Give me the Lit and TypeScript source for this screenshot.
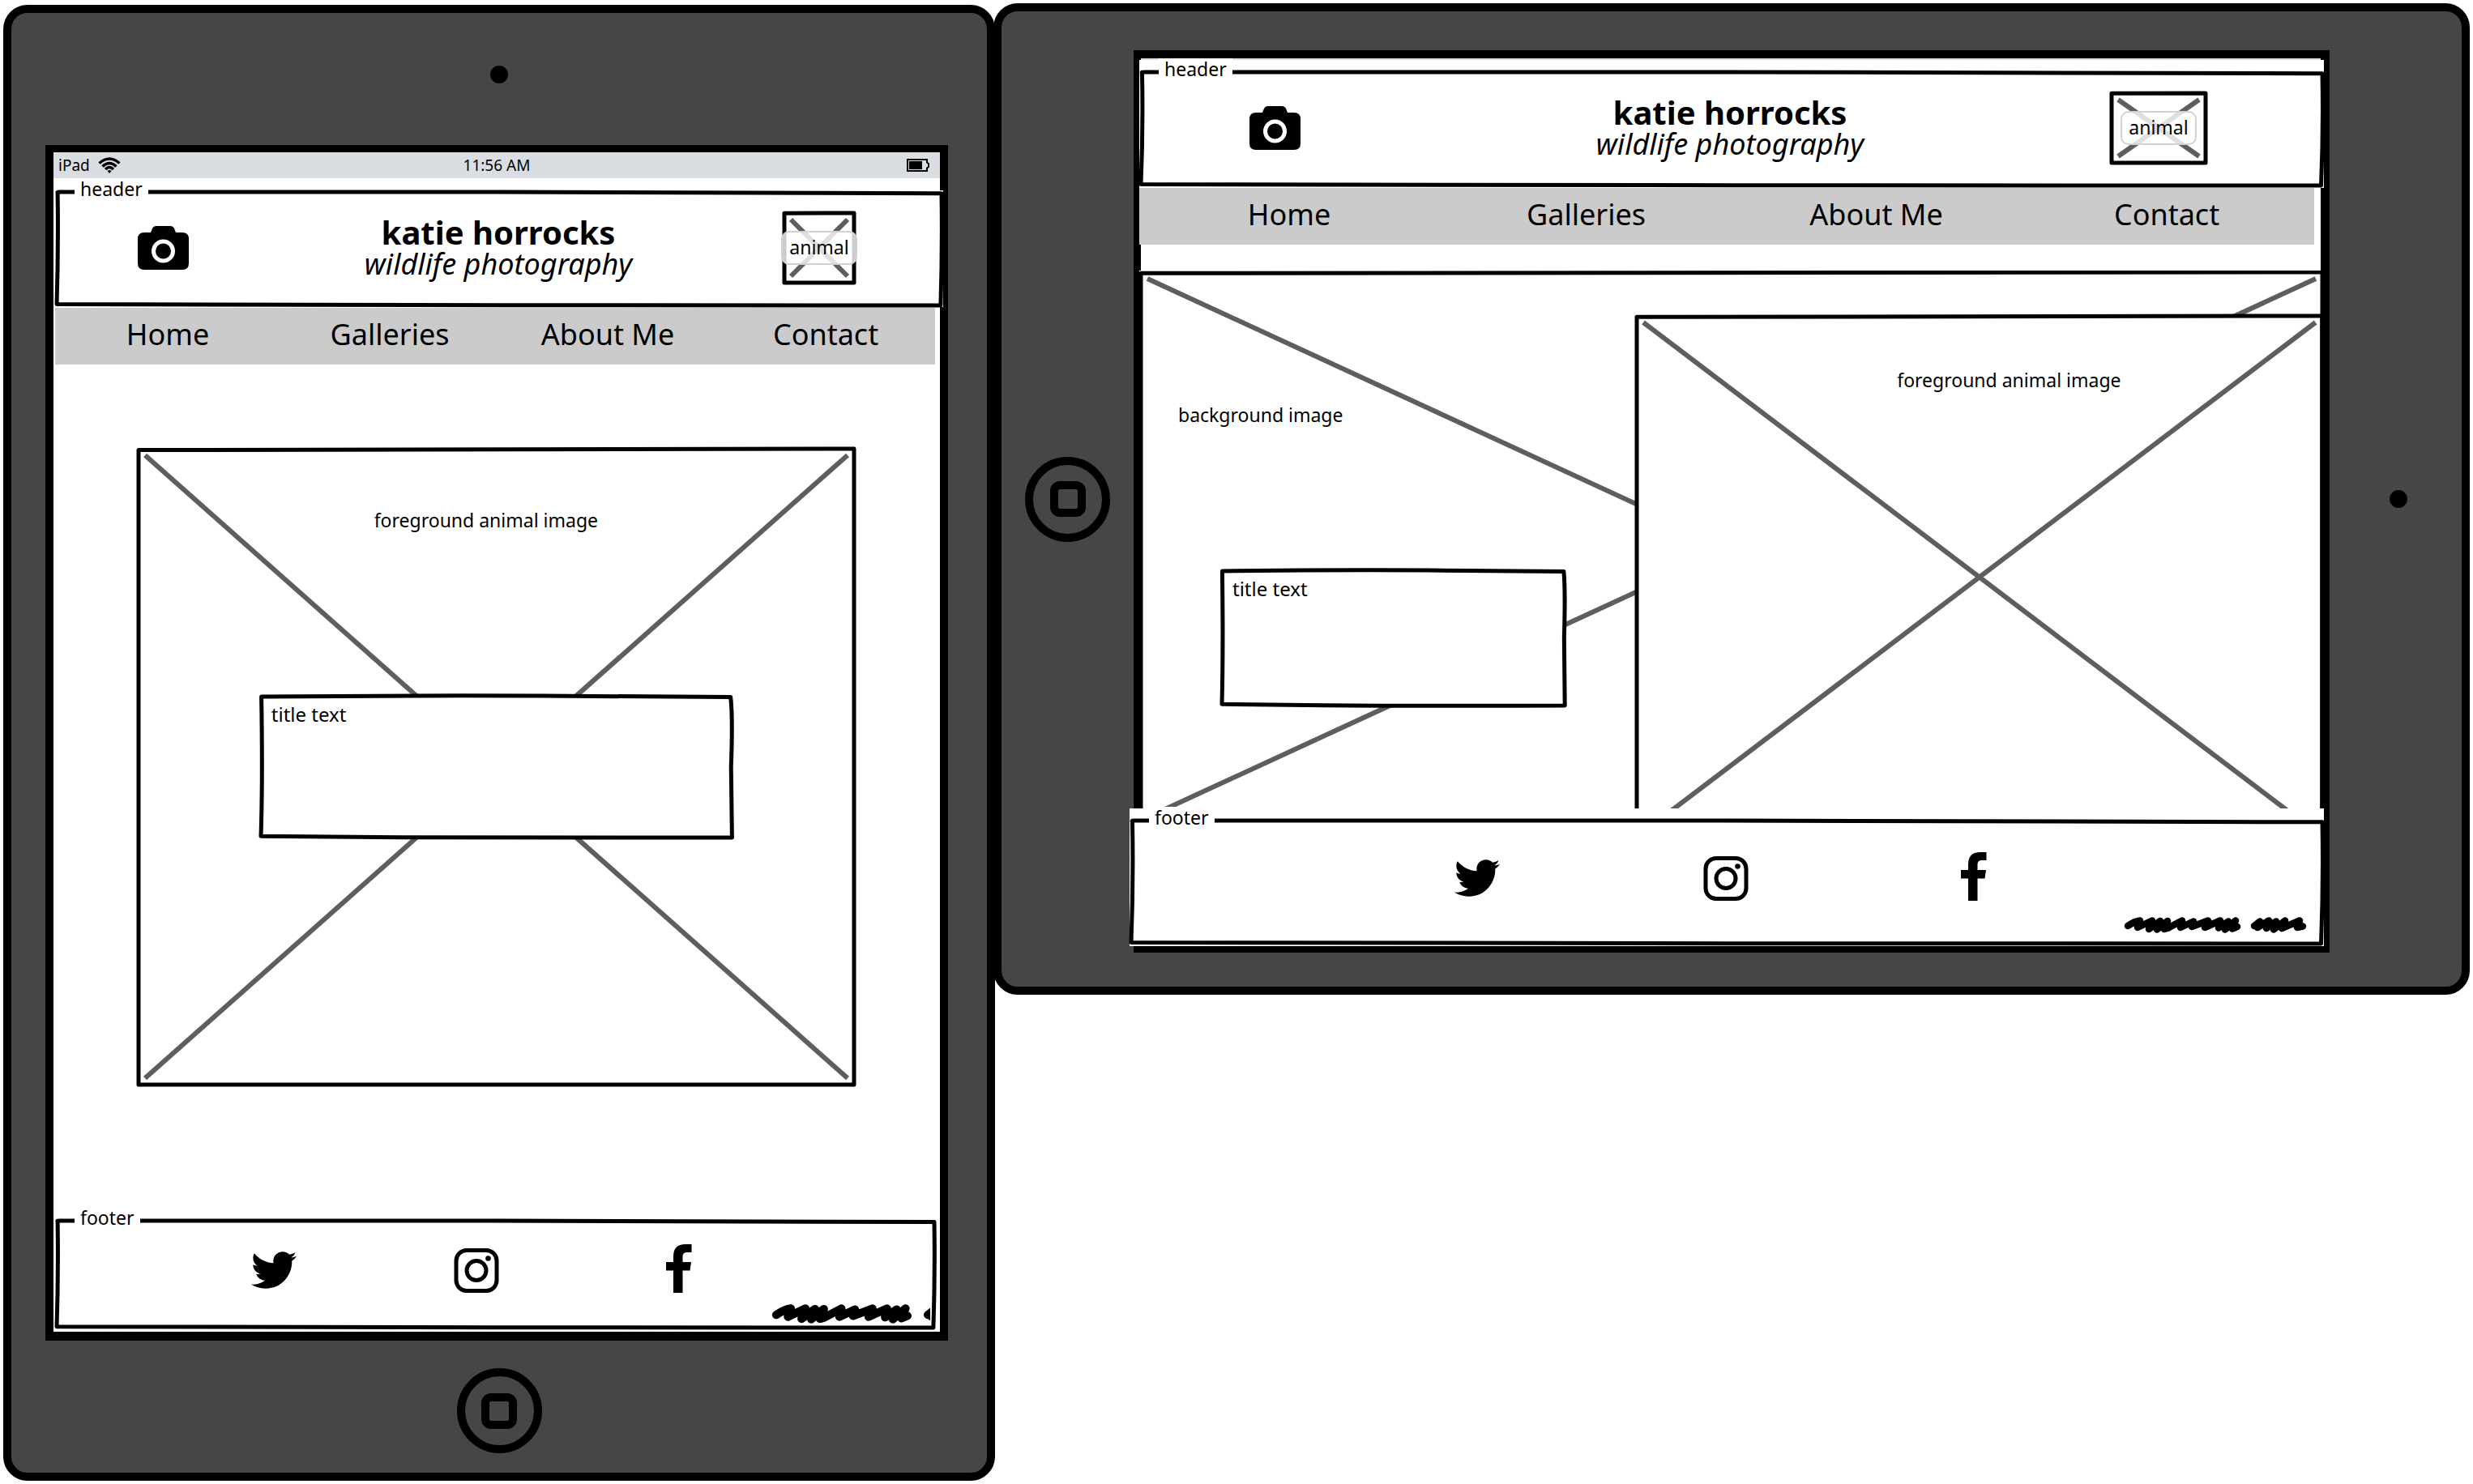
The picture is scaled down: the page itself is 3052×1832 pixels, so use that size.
import { LitElement, html, css, svg } from "lit";
import { customElement, property } from "lit/decorators.js";

const base = css`
  *,
  *::before {
    box-sizing: border-box;
  }
  a {
    color: inherit;
    text-decoration: none;
  }
  svg {
    display: block;
  }
`;

const cameraIcon = html`<svg width="63" height="54" viewBox="0 0 63 54" aria-hidden="true">
  <path d="M8 8h8l2-5q1.500-3 5-3h17q3.500 0 5 3l2 5h8q8 0 8 8v30q0 8-8 8H8q-8 0-8-8V16q0-8 8-8z" />
  <circle cx="31.500" cy="31" r="12" fill="#000" stroke="#fff" stroke-width="5" />
</svg>`;

const twitterIcon = html`<svg width="56" height="60" viewBox="0 -36 512 548" aria-hidden="true">
  <path
    d="M459.37 151.716c.325 4.548.325 9.097.325 13.645 0 138.72-105.583 298.558-298.558 298.558-59.452 0-114.68-17.219-161.137-47.106 8.447.974 16.568 1.299 25.34 1.299 49.055 0 94.213-16.568 130.274-44.832-46.132-.975-84.792-31.188-98.112-72.772 6.498.974 12.995 1.624 19.818 1.624 9.421 0 18.843-1.3 27.614-3.573-48.081-9.747-84.143-51.98-84.143-102.985v-1.299c13.969 7.797 30.214 12.67 47.431 13.319-28.264-18.843-46.781-51.005-46.781-87.391 0-19.492 5.197-37.36 14.294-52.954 51.655 63.675 129.3 105.258 216.365 109.807-1.624-7.797-2.599-15.918-2.599-24.04 0-57.828 46.782-104.934 104.934-104.934 30.213 0 57.502 12.67 76.67 33.137 23.715-4.548 46.456-13.32 66.599-25.34-7.798 24.366-24.366 44.833-46.132 57.827 21.117-2.273 41.584-8.122 60.426-16.243-14.292 20.791-32.161 39.308-52.628 54.253z"
  />
</svg>`;

const instagramIcon = html`<svg width="56" height="60" viewBox="0 0 56 60" aria-hidden="true">
  <rect x="3" y="7.500" width="50" height="50" rx="13" fill="none" stroke="#000" stroke-width="5" />
  <circle cx="28" cy="32.500" r="12" fill="none" stroke="#000" stroke-width="5" />
  <circle cx="42.500" cy="17.500" r="3.300" />
</svg>`;

const facebookIcon = html`<svg width="32" height="60" viewBox="0 0 32 60" aria-hidden="true">
  <path d="M9 60V32.500H0V22H9V15Q9 0 24 0H31.500V10H26Q20.500 10 20.500 15V22H31L29.500 32.500H20.500V60Z" />
</svg>`;

const wifiIcon = html`<svg width="28" height="20" viewBox="0 0 28 20" aria-hidden="true">
  <g fill="none" stroke="#000" stroke-width="3.500">
    <path d="M1.500 7.500Q14-3.500 26.500 7.500" />
    <path d="M5.500 11.500Q14 3.500 22.500 11.500" />
    <path d="M9 15Q14 10 19 15" />
  </g>
  <path d="M11.500 17Q14 15 16.500 17L14 20Z" />
</svg>`;

const batteryIcon = html`<svg width="28" height="16" viewBox="0 0 28 16" aria-hidden="true">
  <path d="M1 1H25V4.500L27 6V10L25 11.500V15H1Z" fill="none" stroke="#000" stroke-width="2" />
  <rect x="3" y="3" width="16" height="10" />
</svg>`;

const scribble = html`<svg class="scribble" viewBox="0 0 226 20" aria-hidden="true">
  <g fill="none" stroke="#000" stroke-width="8.500" stroke-linecap="round" stroke-linejoin="round">
    <path
      d="M5 11Q14 5 20 4.500L17 13L35 4.500L31 15L45 5L41 15.500L54 5L50 15L54 14L72 4.500L70 13L86 5.500L84 12L104 4.500L100 13L119 4.500L117 13.500L129 5.500L125 15.500L138 4.500L134 14.500L140 12"
    />
    <path d="M161 11L168 5.500L165 13L179 4.500L176 14L188 5.500L185 15.500L199 4.500L195 14L217 4.500L214 13L221 11.500" />
  </g>
</svg>`;

const OUTLINES: Record<string, string> = {
  bar: "M.1 .6Q0 0 .3 0L50 0L100 1.200Q100.100 50 99.900 100L50 99.800L0 99Q.2 50 .1 .6Z",
  card: "M.2 .6Q30 -.4 60 0L99.700 .9Q100.200 15 99.800 50L100 100Q60 100.400 30 99.800L0 99Q.4 60 .1 .6Z",
  image: "M0 .2L100 0V100L0 100Z",
};

/* A hand-drawn rectangle that can carry a caption set into its top line and a diagonal cross. */
@customElement("sketch-box")
export class SketchBox extends LitElement {
  @property() outline = "bar";
  @property() legend = "";
  @property({ type: Boolean }) cross = false;

  static styles = [
    base,
    css`
      :host {
        display: block;
        position: relative;
        background: #fff;
      }
      .frame,
      .cross {
        position: absolute;
        overflow: visible;
        pointer-events: none;
      }
      .frame {
        inset: 2px;
        width: calc(100% - 4px);
        height: calc(100% - 4px);
      }
      .cross {
        inset: 10px;
        width: calc(100% - 20px);
        height: calc(100% - 20px);
      }
      .legend {
        position: absolute;
        top: -15px;
        left: 24px;
        padding: 0 7px;
        background: #fff;
        font-size: 23px;
        line-height: 26px;
      }
    `,
  ];

  render() {
    return html`
      <svg class="frame" viewBox="0 0 100 100" preserveAspectRatio="none" aria-hidden="true">
        <path
          d=${OUTLINES[this.outline]}
          fill="none"
          stroke="#000"
          stroke-width="5"
          stroke-linejoin="round"
          vector-effect="non-scaling-stroke"
        />
      </svg>
      ${this.cross
        ? html`<svg class="cross" viewBox="0 0 100 100" preserveAspectRatio="none" aria-hidden="true">
            ${["M0 0L100 100", "M100 0L0 100"].map(
              (d) => svg`<path d=${d} stroke="#5e5e5e" stroke-width="6" vector-effect="non-scaling-stroke" />`
            )}
          </svg>`
        : ""}
      ${this.legend ? html`<span class="legend">${this.legend}</span>` : ""}
      <slot></slot>
    `;
  }
}

@customElement("site-header")
export class SiteHeader extends LitElement {
  @property({ type: Boolean, reflect: true }) wide = false;

  static styles = [
    base,
    css`
      :host {
        display: block;
      }
      .row {
        display: grid;
        grid-template-columns: 1fr auto 1fr;
        align-items: center;
        height: 144px;
        padding: 0 108px 2px 102px;
      }
      :host([wide]) .row {
        padding: 0 144px 2px 136px;
      }
      .brand {
        padding: 0 0 4px 4px;
        text-align: center;
      }
      .name,
      .tagline {
        margin: 0;
        white-space: nowrap;
      }
      .name {
        font-size: 40px;
        line-height: 44px;
        font-weight: 700;
      }
      .tagline {
        font-size: 36px;
        line-height: 34px;
        font-style: italic;
      }
      .thumb {
        display: flex;
        align-items: center;
        justify-content: center;
        justify-self: end;
        width: 90px;
        height: 90px;
      }
      :host([wide]) .thumb {
        width: 120px;
      }
      .tag {
        position: relative;
        flex: none;
        padding: 0 8px 2px;
        border: 2px solid #cfd2d4;
        border-radius: 10px;
        background: rgba(255, 255, 255, 0.8);
        font-size: 23px;
        line-height: 36px;
      }
    `,
  ];

  render() {
    return html`
      <sketch-box legend="header">
        <header class="row">
          <a href="#home" aria-label="Home page">${cameraIcon}</a>
          <div class="brand">
            <h1 class="name">katie horrocks</h1>
            <p class="tagline">wildlife photography</p>
          </div>
          <sketch-box class="thumb" outline="image" cross>
            <span class="tag">animal</span>
          </sketch-box>
        </header>
      </sketch-box>
    `;
  }
}

@customElement("site-nav")
export class SiteNav extends LitElement {
  @property({ type: Boolean, reflect: true }) wide = false;

  static styles = [
    base,
    css`
      :host {
        display: block;
        background: #cbcbcb;
      }
      .links {
        display: grid;
        grid-template-columns: 278fr 270fr 268fr 270fr;
        padding-bottom: 4px;
      }
      :host([wide]) .links {
        grid-template-columns: 370fr 363fr 353fr 364fr;
      }
      .link {
        text-align: center;
        font-size: 36px;
        line-height: 66px;
        white-space: nowrap;
      }
    `,
  ];

  render() {
    return html`<nav class="links">
      ${["Home", "Galleries", "About Me", "Contact"].map(
        (name) => html`<a class="link" href="#${name.toLowerCase().replace(" ", "-")}">${name}</a>`
      )}
    </nav>`;
  }
}

@customElement("site-footer")
export class SiteFooter extends LitElement {
  @property({ type: Boolean, reflect: true }) wide = false;

  static styles = [
    base,
    css`
      :host {
        display: block;
      }
      .body {
        display: flex;
        flex-direction: column;
        gap: 14px;
        padding: 31px 0 7px;
      }
      .icons {
        display: grid;
        grid-template-columns: repeat(3, 1fr);
        justify-items: center;
        width: 69%;
        margin-left: 13.3%;
      }
      .note {
        align-self: flex-end;
        width: 196px;
        margin-right: 7px;
        overflow: hidden;
      }
      .scribble {
        width: 271px;
        height: 24px;
      }
      :host([wide]) .body {
        gap: 20px;
        padding: 41px 0 15px;
      }
      :host([wide]) .icons {
        width: 62.4%;
        margin-left: 18.7%;
      }
      :host([wide]) .note {
        width: 226px;
        margin-right: 21px;
      }
      :host([wide]) .scribble {
        width: 226px;
        height: 20px;
      }
    `,
  ];

  render() {
    return html`
      <sketch-box legend="footer">
        <footer class="body">
          <div class="icons">
            <a href="#twitter" aria-label="Twitter">${twitterIcon}</a>
            <a href="#instagram" aria-label="Instagram">${instagramIcon}</a>
            <a href="#facebook" aria-label="Facebook">${facebookIcon}</a>
          </div>
          <div class="note">${scribble}</div>
        </footer>
      </sketch-box>
    `;
  }
}

@customElement("home-button")
export class HomeButton extends LitElement {
  static styles = [
    base,
    css`
      :host {
        display: block;
      }
      .ring {
        display: grid;
        place-items: center;
        width: 105px;
        height: 105px;
        padding: 0;
        border: 10px solid #000;
        border-radius: 50%;
        background: none;
      }
      .ring::before {
        content: "";
        width: 44px;
        height: 44px;
        border: 10px solid #000;
        border-radius: 12px;
      }
    `,
  ];

  render() {
    return html`<button class="ring" type="button" aria-label="Home button"></button>`;
  }
}

@customElement("app-root")
export class AppRoot extends LitElement {
  static styles = [
    base,
    css`
      :host {
        display: block;
        background: #fff;
        color: #000;
        font-family: "Noto Sans", "Open Sans", sans-serif;
      }
      .board {
        display: grid;
        grid-template-columns: 1224fr 1820fr;
        align-items: start;
        padding: 4px;
      }
      .device {
        display: flex;
        border: 10px solid #000;
        border-radius: 30px;
        background: #464646;
      }
      .portrait {
        flex-direction: column;
        margin-top: 2px;
      }
      .landscape {
        margin-left: -2px;
      }
      .bezel {
        display: flex;
        flex: none;
        align-items: center;
        justify-content: center;
      }
      .portrait .bezel {
        height: 163px;
      }
      .portrait .lens-side {
        padding-bottom: 11px;
      }
      .portrait .button-side {
        padding-top: 10px;
      }
      .landscape .bezel {
        width: 163px;
      }
      .landscape .lens-side {
        padding-left: 6px;
      }
      .lens {
        width: 22px;
        height: 22px;
        border-radius: 50%;
        background: #000;
      }
      .screen {
        min-width: 0;
        background: #fff;
        border: 10px solid #000;
      }
      .portrait .screen {
        margin: 0 48px 0 42px;
        border-top-width: 9px;
        border-bottom-width: 11px;
        padding-bottom: 3px;
      }
      .landscape .screen {
        flex: 1;
        margin: 48px 0 42px;
        border-width: 10px 11px 8px 9px;
      }
      .status {
        display: grid;
        grid-template-columns: 1fr auto 1fr;
        align-items: center;
        padding: 0 6px;
        background: #dadee2;
        font-size: 19px;
        line-height: 32px;
      }
      .carrier {
        display: flex;
        align-items: center;
        gap: 10px;
      }
      .battery {
        justify-self: end;
        margin-right: 7px;
      }
      .portrait site-header {
        margin: 15px -4px 1px 2px;
      }
      .portrait site-nav {
        margin: 0 6px 0 2px;
      }
      .portrait site-footer {
        margin: 0 5px 0 2px;
      }
      .gallery {
        padding: 102px 104px 164px 103px;
      }
      .photo {
        display: flex;
        align-items: center;
        justify-content: center;
        aspect-ratio: 887 / 789;
      }
      .title {
        padding: 11px 15px;
        font-size: 24px;
        line-height: 28px;
      }
      .gallery .title {
        width: 66%;
        height: 179px;
      }
      .caption {
        position: absolute;
        font-size: 23px;
        line-height: 28px;
        white-space: nowrap;
      }
      .gallery .caption {
        top: 76px;
        left: 33%;
      }
      .strip {
        height: 2px;
        background: #dadee2;
      }
      .landscape .top {
        position: relative;
        margin: 0 -4px 0 -2px;
        padding: 13px 0 1px;
        background: #fff;
      }
      .landscape site-nav {
        margin: 0 8px 0 -2px;
      }
      .hero {
        position: relative;
        height: 664px;
        margin: 32px 0 0 -2px;
        overflow: hidden;
      }
      .hero > * {
        position: absolute;
      }
      .backdrop {
        inset: 0 -4px -21px 0;
      }
      .backdrop .caption {
        top: 164px;
        left: 48px;
      }
      .hero .title {
        top: 368px;
        left: 100px;
        width: 29.3%;
        height: 171px;
      }
      .subject {
        top: 54px;
        right: -4px;
        left: 42%;
        height: 649px;
      }
      .subject .caption {
        top: 67px;
        left: 38%;
      }
      .bottom {
        position: relative;
        margin: 0 -4px 0 -14px;
        padding: 13px 0 1px;
        background: #fff;
      }
    `,
  ];

  render() {
    return html`
      <div class="board">
        <section class="device portrait" aria-label="Tablet, portrait">
          <div class="bezel lens-side"><span class="lens"></span></div>
          <div class="screen">
            <div class="status">
              <span class="carrier">iPad ${wifiIcon}</span>
              <span>11:56 AM</span>
              <span class="battery">${batteryIcon}</span>
            </div>
            <site-header></site-header>
            <site-nav></site-nav>
            <main class="gallery">
              <sketch-box class="photo" outline="image" cross>
                <span class="caption">foreground animal image</span>
                <sketch-box class="title" outline="card">title text</sketch-box>
              </sketch-box>
            </main>
            <site-footer></site-footer>
          </div>
          <div class="bezel button-side"><home-button></home-button></div>
        </section>

        <section class="device landscape" aria-label="Tablet, landscape">
          <div class="bezel"><home-button></home-button></div>
          <div class="screen">
            <div class="strip"></div>
            <div class="top"><site-header wide></site-header></div>
            <site-nav wide></site-nav>
            <div class="hero">
              <sketch-box class="backdrop" outline="image" cross>
                <span class="caption">background image</span>
              </sketch-box>
              <sketch-box class="title" outline="card">title text</sketch-box>
              <sketch-box class="subject" outline="image" cross>
                <span class="caption">foreground animal image</span>
              </sketch-box>
            </div>
            <div class="bottom"><site-footer wide></site-footer></div>
          </div>
          <div class="bezel lens-side"><span class="lens"></span></div>
        </section>
      </div>
    `;
  }
}
